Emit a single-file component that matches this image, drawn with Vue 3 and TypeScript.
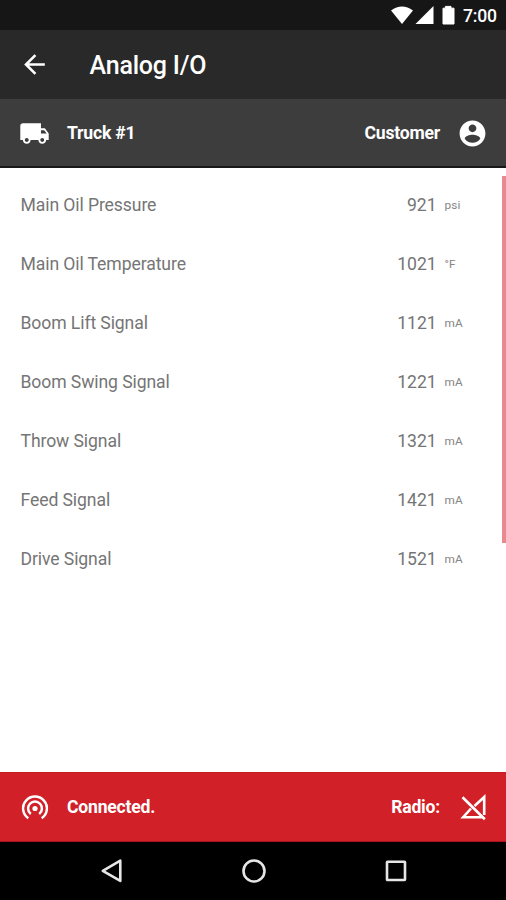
<script setup lang="ts">
interface Reading {
  label: string
  value: number
  unit: string
}

const readings: Reading[] = [
  { label: 'Main Oil Pressure', value: 921, unit: 'psi' },
  { label: 'Main Oil Temperature', value: 1021, unit: '°F' },
  { label: 'Boom Lift Signal', value: 1121, unit: 'mA' },
  { label: 'Boom Swing Signal', value: 1221, unit: 'mA' },
  { label: 'Throw Signal', value: 1321, unit: 'mA' },
  { label: 'Feed Signal', value: 1421, unit: 'mA' },
  { label: 'Drive Signal', value: 1521, unit: 'mA' },
]
</script>

<template>
  <div class="screen">
    <div class="status">
      <svg class="status-icons" width="68" height="22" viewBox="0 0 68 22" fill="#fff">
        <path d="M0 5.500Q11 -2.600 22 5.500L11 19Z" />
        <path d="M42.500 1V19H24.500Z" />
        <path d="M52 3.200H54.400V1.400H60V3.200H63V19H52Z" stroke="#fff" stroke-width="1" stroke-linejoin="round" />
      </svg>
      <span class="clock">7:00</span>
    </div>

    <header class="appbar">
      <svg class="icon" viewBox="0 0 24 24"><path d="M20 11H7.830l5.590-5.590L12 4l-8 8 8 8 1.410-1.410L7.830 13H20v-2z" /></svg>
      <h1 class="title">Analog I/O</h1>
    </header>

    <div class="subbar">
      <svg class="icon" viewBox="0 0 24 24"><path d="M20 8h-3V4H3c-1.100 0-2 .9-2 2v11h2c0 1.660 1.340 3 3 3s3-1.340 3-3h6c0 1.660 1.340 3 3 3s3-1.340 3-3h2v-5l-3-4zM6 18.500c-.83 0-1.500-.67-1.500-1.500s.67-1.500 1.500-1.500 1.500.67 1.500 1.500-.67 1.500-1.500 1.500zm13.500-9l1.960 2.500H17V9.500h2.500zm-1.500 9c-.83 0-1.500-.67-1.500-1.500s.67-1.500 1.500-1.500 1.500.67 1.500 1.500-.67 1.500-1.500 1.500z" /></svg>
      <span class="strong truck">Truck #1</span>
      <span class="strong customer">Customer</span>
      <svg class="icon" viewBox="0 0 24 24"><path d="M12 2C6.480 2 2 6.480 2 12s4.480 10 10 10 10-4.480 10-10S17.520 2 12 2zm0 3c1.660 0 3 1.340 3 3s-1.340 3-3 3-3-1.340-3-3 1.340-3 3-3zm0 14.200c-2.500 0-4.710-1.280-6-3.220.03-1.990 4-3.080 6-3.080 1.990 0 5.970 1.090 6 3.080-1.290 1.940-3.500 3.220-6 3.220z" /></svg>
    </div>

    <main class="content">
      <ul class="list">
        <li v-for="r in readings" :key="r.label" class="row">
          <span class="label">{{ r.label }}</span>
          <span class="value">{{ r.value }}</span>
          <span class="unit">{{ r.unit }}</span>
        </li>
      </ul>
      <div class="scrollbar"></div>
    </main>

    <footer class="connection">
      <svg class="rings" width="31" height="31" viewBox="0 0 31 31">
        <path d="M9.300 26.300A11.900 11.900 0 1 1 22.700 26.300" />
        <path d="M11.800 21.900A6.900 6.900 0 1 1 20.200 21.900" />
        <circle cx="16" cy="16.500" r="2.600" />
      </svg>
      <span class="strong connected">Connected.</span>
      <span class="strong radio">Radio:</span>
      <svg class="no-signal" width="27" height="28" viewBox="0 0 27 28">
        <path d="M14.500 13L24.200 4V22" />
        <path d="M11 15.500L3.200 24.200H23M2.500 4.200L24.800 26.200" />
      </svg>
    </footer>

    <nav class="navbar">
      <svg width="24" height="26" viewBox="0 0 24 26"><path d="M20.300 2.700V22.900L2.800 12.800Z" /></svg>
      <svg width="26" height="26" viewBox="0 0 26 26"><circle cx="13" cy="13" r="10.500" /></svg>
      <svg width="24" height="26" viewBox="0 0 24 26"><rect x="3" y="3.700" width="18" height="18.300" rx=".5" /></svg>
    </nav>
  </div>
</template>

<style>
body {
  margin: 0;
}
</style>

<style scoped>
.screen {
  width: 506px;
  height: 900px;
  display: flex;
  flex-direction: column;
  background: #fff;
  font-family: Roboto, sans-serif;
  overflow: hidden;
}
.status {
  height: 30px;
  box-sizing: border-box;
  background: #161616;
  color: #fff;
  display: flex;
  align-items: center;
  padding-left: 391px;
}
.status-icons {
  flex: none;
  margin-top: 2px;
}
.clock {
  margin: 2px 0 0 4px;
  font-size: 17.6px;
  letter-spacing: -0.2px;
  font-weight: 500;
  line-height: 22px;
}
.appbar {
  height: 69px;
  box-sizing: border-box;
  background: #292929;
  display: flex;
  align-items: center;
  padding: 0 19px;
}
.icon {
  width: 31px;
  height: 31px;
  flex: none;
  fill: #fff;
}
.title {
  margin: 3px 0 0 39.5px;
  color: #fff;
  font-size: 25px;
  letter-spacing: -0.2px;
  font-weight: 500;
  line-height: 32px;
}
.subbar {
  height: 69px;
  box-sizing: border-box;
  background: #3d3d3d;
  border-bottom: 2px solid #181818;
  display: flex;
  align-items: center;
  padding: 1px 18px 0 19px;
}
.strong {
  color: #fff;
  font-size: 17.6px;
  letter-spacing: -0.22px;
  font-weight: 700;
  line-height: 24px;
}
.truck,
.connected {
  margin-left: 17px;
}
.customer,
.radio {
  margin-left: auto;
}
.customer {
  margin-right: 17px;
}
.content {
  flex: 1;
  display: flex;
  align-items: flex-start;
}
.list {
  flex: 1;
  margin: 0;
  padding: 7px 0 0 20.5px;
  list-style: none;
}
.row {
  height: 59px;
  display: flex;
  align-items: center;
  color: #757575;
}
.label {
  flex: 1;
  font-size: 17.6px;
  letter-spacing: -0.1px;
}
.value {
  font-size: 17.6px;
  letter-spacing: -0.08px;
}
.unit {
  width: 57px;
  margin-left: 8px;
  font-size: 11.8px;
  letter-spacing: 0.2px;
  color: #858585;
}
.scrollbar {
  width: 4.5px;
  height: 367px;
  margin-top: 8px;
  background: #e78a90;
}
.connection {
  height: 70px;
  box-sizing: border-box;
  background: #d12027;
  border-top: 1px solid #c51c24;
  border-bottom: 1px solid #a9151c;
  display: flex;
  align-items: center;
  padding: 0 19px;
}
.rings {
  flex: none;
  fill: none;
  stroke: #fff;
  stroke-width: 2.5;
}
.rings circle {
  fill: #fff;
  stroke: none;
}
.radio {
  margin-right: 20px;
}
.no-signal {
  flex: none;
  fill: none;
  stroke: #fff;
  stroke-width: 2.6;
}
.navbar {
  height: 58px;
  background: #000;
  display: flex;
  align-items: center;
  justify-content: space-between;
  box-sizing: border-box;
  padding: 0 98px 0 100px;
}
.navbar svg {
  fill: none;
  stroke: #e6e6e6;
  stroke-width: 2.6;
  stroke-linejoin: round;
}
</style>
